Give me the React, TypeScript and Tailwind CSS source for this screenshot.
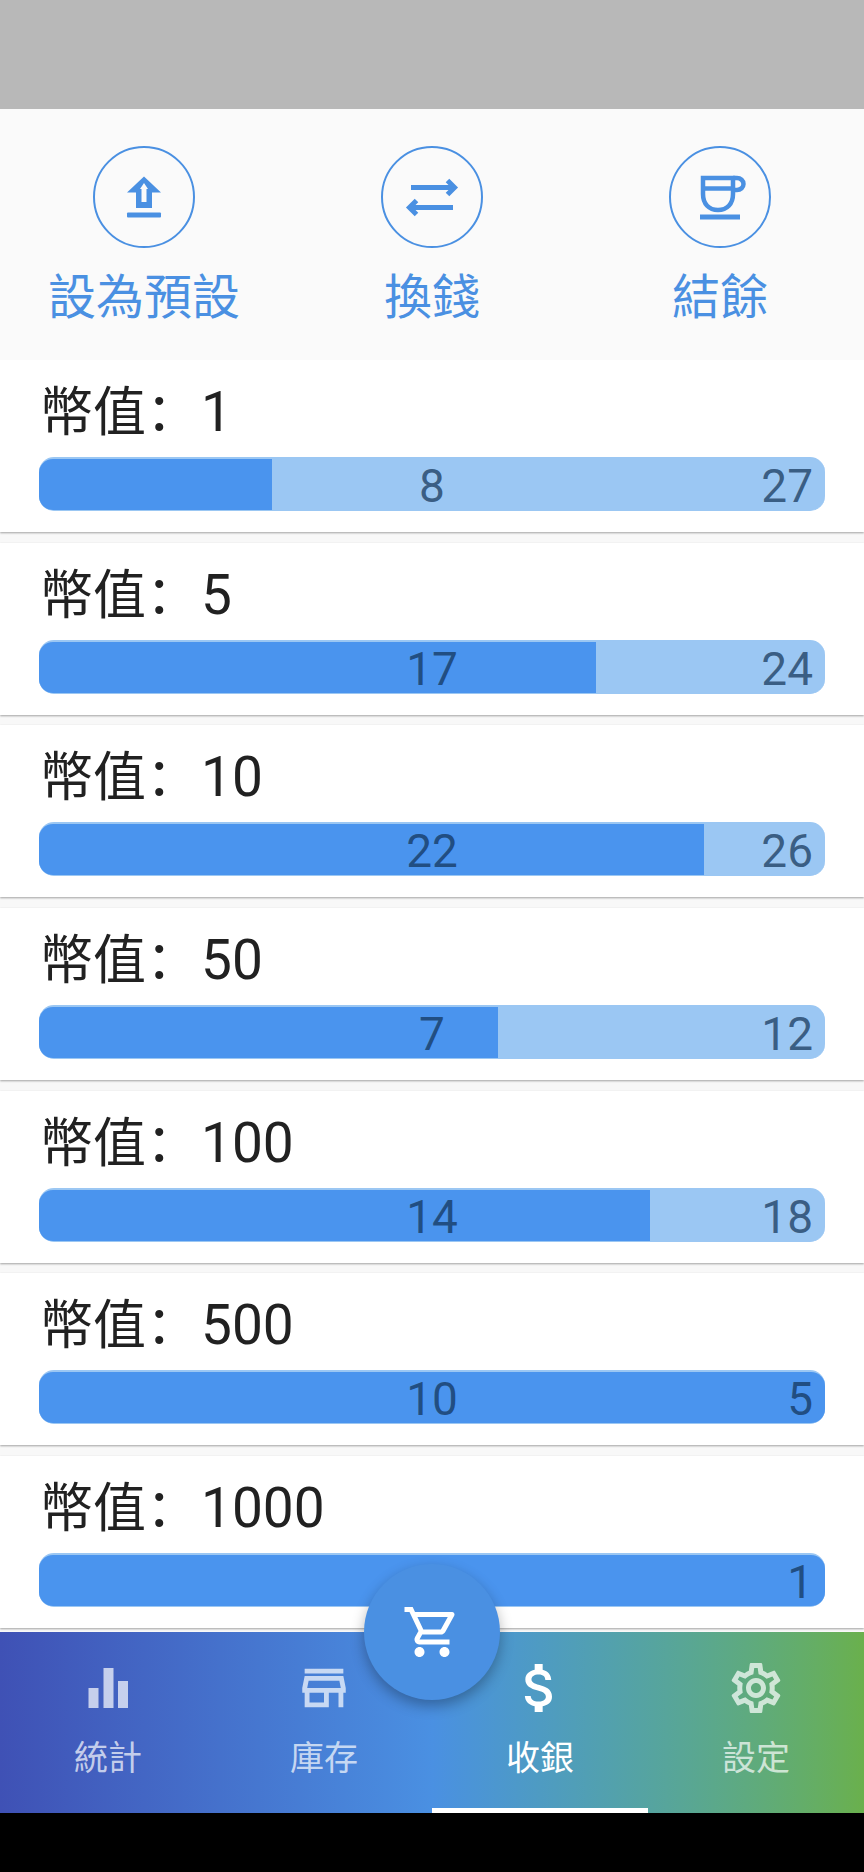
import type { ReactNode } from "react";
import { MdOutlineStore, MdAttachMoney, MdOutlineSettings, MdOutlineShoppingCart } from "react-icons/md";

const font = "font-['Roboto','Noto_Sans_CJK_TC',sans-serif]";

const rows = [
  { v: 1, a: 8, b: 27 },
  { v: 5, a: 17, b: 24 },
  { v: 10, a: 22, b: 26 },
  { v: 50, a: 7, b: 12 },
  { v: 100, a: 14, b: 18 },
  { v: 500, a: 10, b: 5 },
  { v: 1000, a: 0, b: 1 },
];

function UploadIcon() {
  return (
    <svg width="64" height="64" viewBox="-32 -32 64 64" fill="currentColor">
      <path fillRule="evenodd" d="M0 -20.5 L17 -4.5 H8 V11 H-8 V-4.5 H-17 Z M0 -14 L-4 -8 H-2.5 V5 H2.5 V-8 H4 Z" />
      <rect x="-17" y="15.5" width="34" height="5" rx="1" />
    </svg>
  );
}

function SwapIcon() {
  return (
    <svg width="64" height="64" viewBox="-32 -32 64 64" fill="none" stroke="currentColor" strokeWidth="5">
      <path d="M-21 -9.5 H21 M15.5 -16.5 L22.5 -9.5 L15.5 -2.5" />
      <path d="M21 10.5 H-21 M-15.5 3.5 L-22.5 10.5 L-15.5 17.5" />
    </svg>
  );
}

function CupIcon() {
  return (
    <svg width="64" height="64" viewBox="-32 -32 64 64" fill="none" stroke="currentColor" strokeWidth="4.5">
      <path d="M-17 -19 H13 V-3 C13 7 7 13 -2 13 C-11 13 -17 7 -17 -3 Z" />
      <path d="M-17 -8.5 H13" />
      <path d="M13 -19 H17 A6.5 6 0 0 1 17 -7 H13" />
      <rect x="-20" y="17.5" width="40" height="5" fill="currentColor" stroke="none" />
    </svg>
  );
}

function BarsIcon() {
  return (
    <svg width="64" height="64" viewBox="-32 -32 64 64" fill="currentColor">
      <rect x="-19.5" y="0" width="10" height="20" />
      <rect x="-4.5" y="-20" width="10" height="40" />
      <rect x="10" y="-7" width="10" height="27" />
    </svg>
  );
}

function Action({ icon, label }: { icon: ReactNode; label: string }) {
  return (
    <div className="flex w-[288px] flex-col items-center">
      <div className="flex h-[102px] w-[102px] items-center justify-center rounded-full border-[2.5px] border-[#4a90e2] text-[#4a90e2]">
        {icon}
      </div>
      <div className="mt-[18px] text-[48px] leading-[64px] text-[#4a90e2]">{label}</div>
    </div>
  );
}

function Row({ v, a, b }: { v: number; a: number; b: number }) {
  const full = a === 0 || a >= b;
  const pct = full ? 100 : (a / b) * 100;
  return (
    <div className="mb-[10.67px] h-[172px] bg-white px-[39px] pt-[13px] shadow-[0_1px_2px_rgba(0,0,0,0.35)]">
      <div className="h-[84px] pl-[1px] text-[53px] leading-[70px] text-[#212121]">
        幣值<span className="font-['Noto_Sans_CJK_SC',sans-serif]">：</span>
        <span className="ml-[2px] text-[55px]">{v}</span>
      </div>
      <div className="relative h-[54px] rounded-[15px] border-t-2 border-b border-[#9bc7f3] bg-[#9bc7f3] text-[46px] leading-[46px]">
        <div
          className={full ? "h-full rounded-[14px] bg-[#4a94ee]" : "h-full rounded-l-[14px] bg-[#4a94ee]"}
          style={{ width: `${pct}%` }}
        />
        <div className="absolute inset-0 flex items-center justify-center pt-[3px] text-[#0f2f52]/70">{a === 0 ? "" : a}</div>
        <div className="absolute inset-y-0 right-[12px] flex items-center pt-[3px] text-[#0f2f52]/70">{b}</div>
      </div>
    </div>
  );
}

function Tab({ icon, label, cls, active }: { icon: ReactNode; label: string; cls: string; active?: boolean }) {
  return (
    <div className={`relative flex w-[216px] flex-col items-center pt-[24px] ${cls}`}>
      <div className="flex h-[64px] items-center justify-center">{icon}</div>
      <div className="mt-[14px] text-[34px] leading-[48px]">{label}</div>
      {active && <div className="absolute inset-x-0 bottom-0 h-[5px] bg-white" />}
    </div>
  );
}

export default function App() {
  return (
    <div className={`flex h-[1872px] w-[864px] flex-col overflow-hidden bg-black ${font}`}>
      <div className="h-[109px] bg-[#b8b8b8]" />
      <div className="flex h-[251px] justify-center bg-[#fafafa] pt-[37px]">
        <Action icon={<UploadIcon />} label="設為預設" />
        <Action icon={<SwapIcon />} label="換錢" />
        <Action icon={<CupIcon />} label="結餘" />
      </div>
      <div className="h-[1272px] overflow-hidden bg-[#f8f8f8]">
        {rows.map((r) => (
          <Row key={r.v} {...r} />
        ))}
      </div>
      <div className="relative flex h-[181px] bg-gradient-to-r from-[#3f51b5] via-[#4a90e2] to-[#6ab04c]">
        <Tab icon={<BarsIcon />} label="統計" cls="text-white/70" />
        <Tab icon={<MdOutlineStore size={58} />} label="庫存" cls="text-white/70" />
        <Tab icon={<MdAttachMoney size={64} />} label="收銀" cls="text-white" active />
        <Tab icon={<MdOutlineSettings size={60} />} label="設定" cls="text-white/70" />
        <div className="absolute left-[364px] top-[-68px] flex h-[136px] w-[136px] items-center justify-center rounded-full bg-[#4a90e2] text-white shadow-[0_6px_14px_rgba(0,0,0,0.3)]">
          <MdOutlineShoppingCart size={60} />
        </div>
      </div>
    </div>
  );
}
